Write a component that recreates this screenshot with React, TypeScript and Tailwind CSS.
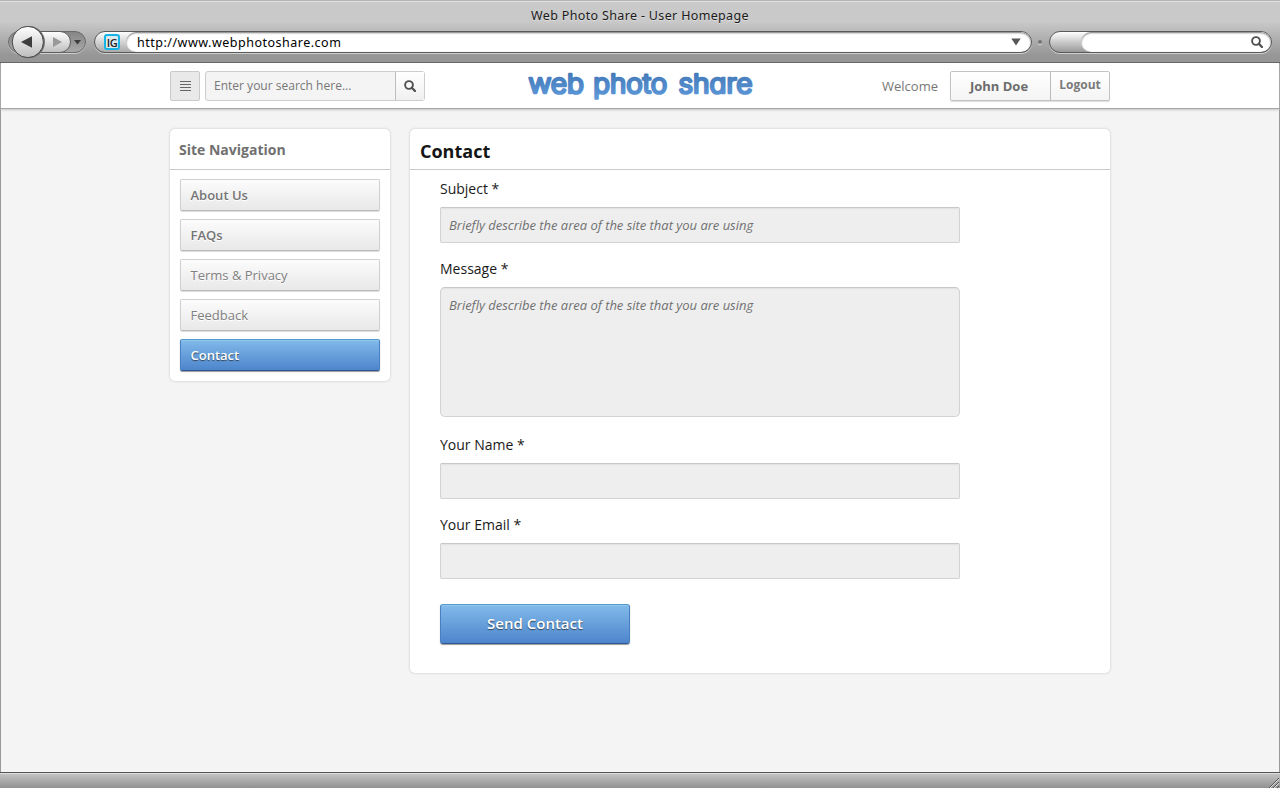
import React from "react";

const navItems = [
  { label: "About Us", weight: "font-semibold text-[#757575]" },
  { label: "FAQs", weight: "font-semibold text-[#757575]" },
  { label: "Terms & Privacy", weight: "font-normal text-[#808080]" },
  { label: "Feedback", weight: "font-normal text-[#808080]" },
  { label: "Contact", active: true, weight: "" },
];

function SearchIcon({ className }: { className: string }) {
  return (
    <svg viewBox="0 0 12 12" className={className} fill="none" stroke="currentColor">
      <circle cx="5" cy="5" r="3.9" strokeWidth="1.9" />
      <path d="M7.8 7.8 L11 11" strokeWidth="2.3" strokeLinecap="round" />
    </svg>
  );
}

function BrowserChrome() {
  return (
    <div className="h-[63px] shrink-0 border-b border-[#5f5f5f] bg-linear-to-b from-[#c9c9c9] from-35% to-[#969696] to-90% shadow-[inset_0_1px_0_#b4b4b4,inset_0_2px_0_#e0e0e0]">
      <div className="flex h-[26px] items-center justify-center pt-[6px] font-['Noto_Sans',sans-serif] text-[12.5px] tracking-[0.34px] text-[#1a1a1a] [text-shadow:0_1px_0_#dedede]">
        <span>Web Photo Share - User Homepage</span>
      </div>
      <div className="flex h-[32px] items-center pl-2">
        <svg width="79" height="34" viewBox="0 0 79 34" className="shrink-0">
          <defs>
            <linearGradient id="btn" x1="0" y1="0" x2="0" y2="1">
              <stop offset="0" stopColor="#fff" />
              <stop offset="1" stopColor="#bdbdbd" />
            </linearGradient>
            <linearGradient id="track" x1="0" y1="0" x2="0" y2="1">
              <stop offset="0" stopColor="#858585" />
              <stop offset="1" stopColor="#a9a9a9" />
            </linearGradient>
          </defs>
          <rect x="0.5" y="7.5" width="77" height="21" rx="10.5" fill="none" stroke="#d0d0d0" />
          <rect x="0.5" y="6.5" width="77" height="21" rx="10.5" fill="url(#track)" stroke="#6a6a6a" />
          <rect x="20" y="6.5" width="42.5" height="21" rx="10.5" fill="url(#btn)" stroke="#5c5c5c" />
          <circle cx="20.9" cy="17" r="16" fill="#656565" />
          <circle cx="19.8" cy="17" r="15.6" fill="url(#btn)" stroke="#484848" />
          <path d="M13 17 L24 11.2 V22.8 Z" fill="#3d3d3d" />
          <path d="M54 17 L45 12 V22 Z" fill="#999" />
          <path d="M66 15 H73 L69.5 19.5 Z" fill="#3d3d3d" />
        </svg>
        <div className="ml-[7px] flex h-[22px] w-[938px] shrink-0 overflow-hidden rounded-full border border-[#5a5a5a] bg-linear-to-b from-white to-[#aaa] shadow-[0_1px_0_#d0d0d0]">
          <div className="ml-[9px] mt-[2px] flex h-4 w-4 items-center justify-center rounded-[3px] border-2 border-[#16b4e6] bg-[#dceaf0] font-['Open_Sans',sans-serif] text-[11px] font-semibold leading-none tracking-[-0.5px] text-[#222]">
            IG
          </div>
          <div className="ml-[6px] flex flex-1 items-center justify-between rounded-full bg-white pl-[11px] pr-[10px] shadow-[inset_0_1px_2px_#777]">
            <span className="pt-[2px] font-['Noto_Sans',sans-serif] text-[12.5px] tracking-[0.5px] text-black">http://www.webphotoshare.com</span>
            <svg width="10" height="8" viewBox="0 0 10 8"><path d="M0.3 0.5 H9.7 L5 7.5 Z" fill="#575757" /></svg>
          </div>
        </div>
        <div className="mx-[6px] h-[4px] w-[4px] rounded-full bg-[#737373] shadow-[0_1px_0_#ddd]" />
        <div className="ml-px flex h-[22px] w-[223px] shrink-0 overflow-hidden rounded-full border border-[#5a5a5a] bg-linear-to-b from-white to-[#999] shadow-[0_1px_0_#d0d0d0]">
          <div className="ml-[31px] flex flex-1 items-center justify-end rounded-full bg-white pr-[8px] shadow-[inset_0_1px_2px_#777]">
            <SearchIcon className="mb-px h-3 w-3 text-[#505050]" />
          </div>
        </div>
      </div>
    </div>
  );
}

function Logo() {
  return (
    <svg width="230" height="40" viewBox="0 0 230 40" className="-mt-1 ml-[101px] shrink-0 overflow-visible">
      <defs>
        <linearGradient id="logo" gradientUnits="userSpaceOnUse" x1="0" y1="4" x2="0" y2="33">
          <stop offset="0" stopColor="#4277b5" />
          <stop offset="1" stopColor="#609bdc" />
        </linearGradient>
      </defs>
      <g
        fill="url(#logo)" stroke="url(#logo)" strokeWidth="2.5" strokeLinejoin="round" strokeLinecap="round"
        className="font-['Inter',sans-serif] text-[26px] font-light [font-feature-settings:'cv11']"
      >
        <text x="2.5" y="26" textLength="55.5" lengthAdjust="spacingAndGlyphs">web</text>
        <text x="67.3" y="26" textLength="74" lengthAdjust="spacingAndGlyphs">photo</text>
        <text x="152.5" y="26" textLength="74" lengthAdjust="spacingAndGlyphs">share</text>
      </g>
    </svg>
  );
}

function SiteHeader() {
  return (
    <header className="flex h-[46px] shrink-0 items-start border-b border-[#a5a5a5] bg-white pl-[169px] pt-2 shadow-[0_1px_2px_#c4c4c4]">
      <button className="flex h-[30px] w-[30px] flex-col items-center justify-center gap-[2px] rounded-[2px] border border-[#c9c9c9] bg-[#e9e9e9]">
        <i className="h-px w-[11px] bg-[#666]" />
        <i className="h-px w-[11px] bg-[#666]" />
        <i className="h-px w-[11px] bg-[#666]" />
        <i className="h-px w-[11px] bg-[#666]" />
      </button>
      <div className="ml-[5px] flex h-[30px] w-[220px] rounded-[3px] border border-[#cdcdcd] bg-[#f4f4f4]">
        <span className="flex-1 pl-2 text-[12px] leading-[28px] tracking-[0.01px] text-[#777]">Enter your search here...</span>
        <button className="flex w-[29px] items-center justify-center border-l border-[#bcbcbc] bg-linear-to-b from-white to-[#f0f0f0]">
          <SearchIcon className="h-3 w-3 text-[#505050]" />
        </button>
      </div>
      <Logo />
      <span className="ml-[126px] w-[68px] text-[13px] leading-[30px] text-[#777]">Welcome</span>
      <div className="flex h-[30px] w-[160px] rounded-[2px] border border-[#c3c3c3] bg-linear-to-b from-white to-[#f4f4f4] font-bold text-[#6c6c6c] shadow-[0_1px_1px_#ddd]">
        <span className="w-[100px] border-r border-[#bbb] pr-[3px] text-center text-[13px] leading-[29px]">John Doe</span>
        <span className="flex-1 text-center text-[12px] leading-[26px] text-[#7a7a7a]">Logout</span>
      </div>
    </header>
  );
}

function Field({ label, placeholder, box }: { label: string; placeholder?: string; box: string }) {
  return (
    <div>
      <div className="h-7 text-[14px] leading-[20px] text-[#1a1a1a]">{label}</div>
      <div className={`w-[520px] border border-[#d2d2d2] border-t-[#c8c8c8] bg-[#eee] pl-2 text-[13px] italic leading-[34px] tracking-[-0.02px] text-[#717171] shadow-[inset_0_1px_1px_#e2e2e2] ${box}`}>
        {placeholder}
      </div>
    </div>
  );
}

export default function App() {
  return (
    <div className="flex h-[788px] w-[1280px] flex-col overflow-hidden bg-[#f4f4f4] font-['Open_Sans',sans-serif]">
      <BrowserChrome />
      <div className="flex min-h-0 flex-1 flex-col border-x border-[#999]">
        <SiteHeader />
        <main className="flex items-start gap-5 pl-[169px] pt-5">
          <aside className="h-[252px] w-[220px] rounded-[5px] bg-white shadow-[0_0_2px_1px_#dedede]">
            <h2 className="h-[41px] border-b border-[#cacaca] pl-[9px] text-[14px] font-bold leading-[41px] text-[#707070]">Site Navigation</h2>
            <nav className="flex flex-col gap-2 px-[10px] pt-[9px]">
              {navItems.map((item) => (
                <a
                  key={item.label}
                  className={`h-8 rounded-[2px] border pl-[9.5px] text-[13px] leading-[31px] ${item.weight} ${
                    item.active
                      ? "border-[#477fc0] border-b-[#2d5694] border-t-[#5499ce] bg-linear-to-b from-[#82baea] to-[#4d85cc] font-semibold text-white shadow-[0_1px_1px_#999,inset_0_1px_0_#91c8ef] [text-shadow:0_1px_1px_#345]"
                      : "border-[#d0d0d0] border-b-[#b9b9b9] bg-linear-to-b from-[#fcfcfc] to-[#e8e8e8] shadow-[0_1px_1px_#ddd] [text-shadow:0_1px_0_#fff]"
                  }`}
                >
                  {item.label}
                </a>
              ))}
            </nav>
          </aside>
          <section className="h-[544px] w-[700px] rounded-[5px] bg-white shadow-[0_0_2px_1px_#dedede]">
            <h1 className="h-[41px] border-b border-[#cacaca] pl-[10px] text-[18px] font-bold leading-[44px] text-[#151515]">Contact</h1>
            <div className="flex flex-col pl-[30px] pt-[9px]">
              <div className="h-20"><Field label="Subject *" placeholder="Briefly describe the area of the site that you are using" box="h-9 rounded-[2px]" /></div>
              <div className="h-44"><Field label="Message *" placeholder="Briefly describe the area of the site that you are using" box="h-[130px] rounded-[5px]" /></div>
              <div className="h-20"><Field label="Your Name *" box="h-9 rounded-[2px]" /></div>
              <div className="h-[89px]"><Field label="Your Email *" box="h-9 rounded-[2px]" /></div>
              <button className="h-10 w-[190px] rounded-[3px] border border-[#477fc0] border-b-[#2d5694] border-t-[#5499ce] bg-linear-to-b from-[#82baea] to-[#4d85cc] pb-[2px] text-[15px] font-semibold text-white shadow-[0_1px_1px_#999,inset_0_1px_0_#91c8ef] [text-shadow:0_1px_1px_#345]">
                Send Contact
              </button>
            </div>
          </section>
        </main>
      </div>
      <footer className="flex h-4 shrink-0 items-end justify-end border-t border-[#555] bg-linear-to-b from-[#c6c6c6] to-[#929292] pr-px shadow-[inset_0_1px_0_#ddd]">
        <svg width="11" height="11" viewBox="0 0 11 11" stroke="#555" fill="none">
          <path d="M1 11 L11 1 M5 11 L11 5 M9 11 L11 9" />
          <path d="M2 11 L11 2 M6 11 L11 6" stroke="#ddd" />
        </svg>
      </footer>
    </div>
  );
}
